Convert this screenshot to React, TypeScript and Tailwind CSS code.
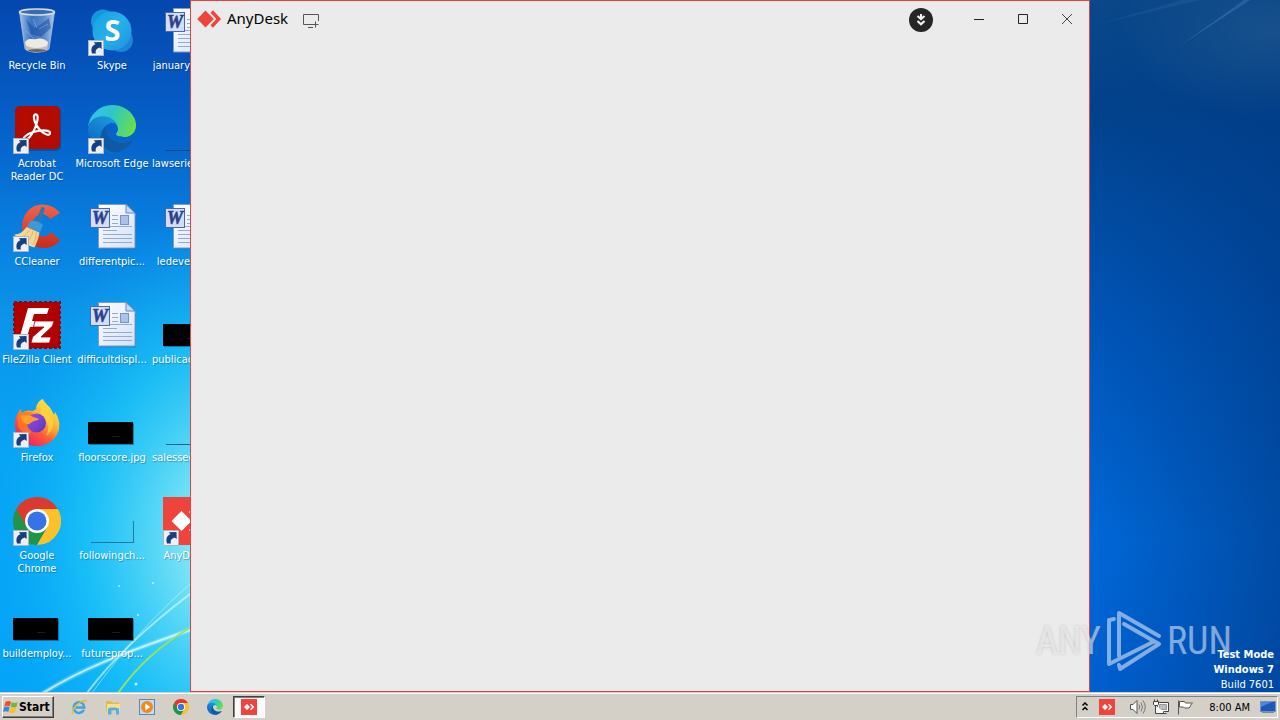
import type { ReactNode } from "react";

function Shortcut() {
  return (
    <g>
      <rect x="0.5" y="33.5" width="15" height="15" fill="#eceff5" stroke="#a9b4c4" />
      <path d="M4 46.500c-1.500-4.500 0-8 3.500-9.200L5.800 35.300l7.700-.3.200 7-2.100-1.500C8.500 41.500 7 43.500 8 46.500z" fill="#173f80" />
    </g>
  );
}

function Glyph({ children }: { children: ReactNode }) {
  return (
    <svg viewBox="0 0 48 49" className="block h-[49px] w-12 shrink-0" aria-hidden="true">
      {children}
    </svg>
  );
}

function RecycleBin() {
  return (
    <Glyph>
      <defs>
        <linearGradient id="bin" x1="0" x2="1">
          <stop offset="0" stopColor="#c4d8ee" stopOpacity=".85" />
          <stop offset=".35" stopColor="#5d8fcb" stopOpacity=".6" />
          <stop offset=".7" stopColor="#8fb5e0" stopOpacity=".6" />
          <stop offset="1" stopColor="#d6e4f3" stopOpacity=".85" />
        </linearGradient>
      </defs>
      <path d="M6.500 5l5.500 37c4 4 20 4 24 0L41.500 5z" fill="url(#bin)" stroke="#a7bfd9" strokeWidth=".8" />
      <path d="M13 12l8 9 6-3 9-7 2 10-10 9-10-3z" fill="#12489a" opacity=".5" />
      <path d="M13 24l8 8M26 22l9-5M20 12l4 9" stroke="#e3eefa" opacity=".3" />
      <path d="M12 35c4-5 7-2 11-3s8-1 12 3l-1 6c-4 4-17 4-21 0z" fill="#eee9e1" />
      <path d="M12 38c6 4 17 4 23 0l-.7 4.500c-4 4-18 4-21.600 0z" fill="#c4bcb5" />
      <ellipse cx="24" cy="43.500" rx="9" ry="1.500" fill="#676768" />
      <ellipse cx="24" cy="5" rx="17.500" ry="3" fill="#3f6ca6" stroke="#d5dde7" strokeWidth="1.600" />
    </Glyph>
  );
}

function Skype() {
  return (
    <Glyph>
      <defs>
        <linearGradient id="sky" x1="0" y1="0" x2="1" y2="1">
          <stop offset="0" stopColor="#159fe0" />
          <stop offset=".5" stopColor="#25b1ec" />
          <stop offset="1" stopColor="#2190dc" />
        </linearGradient>
      </defs>
      <circle cx="15" cy="14.500" r="12" fill="#1697d9" />
      <circle cx="33" cy="33" r="12" fill="#1c86d6" />
      <circle cx="24" cy="24" r="19.500" fill="url(#sky)" />
      <text x="24.500" y="33.500" textAnchor="middle" fill="#fff" fontFamily="Open Sans, sans-serif" fontWeight="700" fontSize="29">S</text>
      <Shortcut />
    </Glyph>
  );
}

function Acrobat() {
  return (
    <Glyph>
      <rect x="3" y="2" width="45" height="44" rx="5" fill="#10263f" opacity=".35" />
      <rect x="2" y="1" width="45" height="43" rx="5" fill="#b30b00" />
      <path
        d="M22 9.500c3-1 3.500 4 1.500 9.500-2 6-6 13-9.500 15.500-3 1.500-4.500-1-1.500-3.500 3-2.500 10-5 16-5.500 5-.4 9 .5 8.500 3-.6 2.600-5.500.8-9-2.500-4-4-6.500-9-7-12.500-.2-2 .2-3.600 1-4z"
        fill="none"
        stroke="#fff"
        strokeWidth="2.200"
      />
      <Shortcut />
    </Glyph>
  );
}

function EdgeArt({ id }: { id: string }) {
  return (
    <>
      <defs>
        <linearGradient id={id + "a"} x1="0" x2="1">
          <stop offset="0" stopColor="#0c59a4" />
          <stop offset="1" stopColor="#1659a3" />
        </linearGradient>
        <linearGradient id={id + "b"} x1=".8" y1="0" x2=".3" y2="1">
          <stop offset="0" stopColor="#1b9de2" />
          <stop offset=".5" stopColor="#147fd0" />
          <stop offset="1" stopColor="#0b68b8" />
        </linearGradient>
        <linearGradient id={id + "c"} x1="0" y1=".3" x2="1" y2=".6">
          <stop offset="0" stopColor="#35c1f1" />
          <stop offset=".45" stopColor="#2fc6c6" />
          <stop offset="1" stopColor="#68e04a" />
        </linearGradient>
      </defs>
      <path fill={`url(#${id}a)`} d="M231.1 190.5c-3.4 1.8-6.9 3.4-10.5 4.7a101.8 101.8 0 0 1-35.9 6.5c-47.3 0-88.5-32.5-88.5-74.3 0-11.4 6.4-21.9 16.1-27.3-42.8 1.8-53.8 46.4-53.8 72.5 0 74 68.1 81.4 82.8 81.4 7.9 0 19.8-2.3 27-4.6l1.3-.4a128.3 128.3 0 0 0 66.6-52.8 4 4 0 0 0-5.1-5.7z" />
      <path fill={`url(#${id}b)`} d="M105.7 241.4a79.2 79.2 0 0 1-22.7-21.3 80.7 80.7 0 0 1 29.5-120c3.2-1.5 8.5-4.1 15.6-4a32.4 32.4 0 0 1 25.7 13 31.9 31.9 0 0 1 6.3 18.7c0-.2 24.5-79.6-80-79.6-43.9 0-80 41.6-80 78.2a130.2 130.2 0 0 0 12.1 56 128 128 0 0 0 156.4 67 75.5 75.5 0 0 1-62.8-8z" />
      <path fill={`url(#${id}c)`} d="M152.3 148.9c-.9 1-3.4 2.5-3.4 5.6 0 2.6 1.7 5.2 4.8 7.3 14.4 10.1 41.7 8.7 41.7 8.7a59.9 59.9 0 0 0 30.4-8.4 61.4 61.4 0 0 0 30.4-53.2c.3-22.4-8-37.3-11.4-43.9C223.5 23.7 177.8 0 128 0A128 128 0 0 0 0 126.2c.5-36.5 36.8-66 80-66 3.5 0 23.5.3 42 10a72.6 72.6 0 0 1 30.9 29.3c6.1 10.6 7.2 24.1 7.2 29.5s-2.7 13.3-7.8 19.9z" />
    </>
  );
}

function Edge() {
  return (
    <Glyph>
      <g transform="scale(.1875)">
        <EdgeArt id="edge" />
      </g>
      <Shortcut />
    </Glyph>
  );
}

function CCleaner() {
  return (
    <Glyph>
      <defs>
        <linearGradient id="cc" x1="0" y1="0" x2="0" y2="1">
          <stop offset="0" stopColor="#f0654a" />
          <stop offset="1" stopColor="#c92a1c" />
        </linearGradient>
      </defs>
      <path d="M47 10C38-1 22-1 14 9c-8 10-6 25 4 32 9 6 22 6 29-4l-9-8c-4 6-10 5-14 2-5-4-6-11-2-16 4-5 11-5 15 1z" fill="url(#cc)" />
      <path d="M28.500 4l3.500 1-5 17-5-1.500z" fill="#2a78b4" />
      <path d="M17 18c3-1 10 0 13 4l-3 7-13-5z" fill="#3b9bd8" />
      <path d="M13.500 24l13 5.500c-1 6-3 11-5 15-5-1-15-6-20-13 5 0 9-3 12-7.500z" fill="#f5d694" />
      <path d="M17 26c-2 4-6 8-10 9M20 28c-1 5-4 10-7 12M23.500 29c-.5 5-2 10-3.500 13" stroke="#dcb573" fill="none" />
      <Shortcut />
    </Glyph>
  );
}

function FileZilla() {
  return (
    <Glyph>
      <rect x="1" y="1" width="46" height="46" fill="#b00000" />
      <rect x="1" y="1" width="46" height="46" fill="none" stroke="#8d0a12" strokeWidth="2" strokeDasharray="3 2" />
      <path d="M15 7h21l-2 6H21l-2 7h12l-2 6H17l-5 16H5z" fill="#fff" />
      <path d="M22 20h19l-1.500 5L28 36h10l-1.500 6H18l1.500-6L31 26h-10.500z" fill="#fff" stroke="#b00000" strokeWidth=".8" />
      <Shortcut />
    </Glyph>
  );
}

function FirefoxLogo() {
  return (
    <Glyph>
      <defs>
        <linearGradient id="fx" x1=".85" y1="0" x2=".2" y2="1">
          <stop offset="0" stopColor="#fff14f" />
          <stop offset=".4" stopColor="#ffb02e" />
          <stop offset=".65" stopColor="#ff5a36" />
          <stop offset="1" stopColor="#e3166f" />
        </linearGradient>
        <linearGradient id="fp" x1="0" y1="0" x2="1" y2="1">
          <stop offset="0" stopColor="#a04cf0" />
          <stop offset="1" stopColor="#5636b8" />
        </linearGradient>
      </defs>
      <path d="M30 0c1 4 7 7 9 12l2 4 1-3c4 6 5 12 4 17-2 10-11 17-22 17C11 47 2 38 2 26 2 18 5 13 8 10c0 2 0 3 1 4 3-3 7-3 10-2 1 0 3-1 4-2 0-4 3-9 7-10z" fill="url(#fx)" />
      <path d="M31 3c0 5 8 9 9 18 1 7-2 13-7 16 3-6 3-11 0-15-2-4-6-5-6-10 0-3 1-7 4-9z" fill="#ffd43d" opacity=".8" />
      <path d="M7 10c0 3 1 4 2 4 3-2 8-2 12 1l1 8-5 12C9 34 5 30 5 25c-.5-6 0-11 2-15z" fill="#ff7a22" opacity=".8" />
      <circle cx="23.500" cy="24" r="9.500" fill="url(#fp)" />
      <path d="M8 17c5-2 9-1 12 1 2 1 5 1 6 2-1 2-5 1-7 3-2 1-3 3-6 2-3-2-5-4-5-8z" fill="#ffa028" />
      <Shortcut />
    </Glyph>
  );
}

function ChromeArt() {
  return (
    <>
      <path d="M24 24L3.200 12A24 24 0 0 0 24 48l10.400-18z" fill="#219447" />
      <path d="M44.800 12A24 24 0 0 1 24 48l10.400-18L24 12z" fill="#f9c22b" />
      <path d="M24 12h20.800A24 24 0 0 0 3.200 12l10.400 18z" fill="#db3a2f" />
      <circle cx="24" cy="24" r="12" fill="#fff" />
      <circle cx="24" cy="24" r="9.500" fill="#3573e6" />
    </>
  );
}

function Chrome() {
  return (
    <Glyph>
      <ChromeArt />
      <Shortcut />
    </Glyph>
  );
}

function WordDoc() {
  return (
    <Glyph>
      <defs>
        <linearGradient id="pg" x1="0" y1="0" x2="1" y2="1">
          <stop offset="0" stopColor="#fff" />
          <stop offset="1" stopColor="#d4e0f6" />
        </linearGradient>
      </defs>
      <path d="M10.500 1.500h28l8.500 9v34.500H10.500z" fill="url(#pg)" stroke="#7d9bcb" />
      <path d="M38 1.500v8.500h9z" fill="#c9daf4" stroke="#6787bd" />
      <path d="M15 27.500h14M15 31.500h29M15 35.500h29M15 39.500h29M24 12.500h6M24 16.500h6M24 20.500h6M15 23.500h29" stroke="#92aad6" />
      <rect x="32.500" y="12.500" width="8" height="9" fill="#a9c2e6" stroke="#7595ca" />
      <path d="M12 46h36V13" stroke="#315f98" opacity=".4" fill="none" />
      <rect x="2.500" y="5.500" width="19" height="19" fill="#d3def4" stroke="#4a68ad" />
      <text x="12" y="21" textAnchor="middle" fill="#2b3f8f" stroke="#2b3f8f" strokeWidth=".6" fontFamily="Liberation Serif, serif" fontStyle="italic" fontWeight="700" fontSize="18">W</text>
    </Glyph>
  );
}

function BlackThumb() {
  return (
    <Glyph>
      <rect x="1" y="24" width="45" height="22" fill="#063a60" opacity=".5" />
      <rect y="23" width="45" height="22" fill="#000" />
      <path d="M24 37.500h8" stroke="#1c1c1c" />
    </Glyph>
  );
}

function ClearThumb() {
  return (
    <Glyph>
      <path d="M3 45.500h42.500V24" fill="none" stroke="#12617f" opacity=".75" />
    </Glyph>
  );
}

function FlatThumb() {
  return (
    <Glyph>
      <path d="M3 45.500h42" fill="none" stroke="#0e3a66" opacity=".75" />
    </Glyph>
  );
}

function AnyDeskTile() {
  return (
    <Glyph>
      <rect width="48" height="48" fill="#ef443b" />
      <path d="M18.500 14l10 10-10 10-10-10z" fill="#fff" />
      <path d="M29 12l12 12-12 12-3-3 9-9-9-9z" fill="#fff" />
      <Shortcut />
    </Glyph>
  );
}

type Item = { label: string; art: ReactNode };

const columns: Item[][] = [
  [
    { label: "Recycle Bin", art: <RecycleBin /> },
    { label: "Acrobat Reader DC", art: <Acrobat /> },
    { label: "CCleaner", art: <CCleaner /> },
    { label: "FileZilla Client", art: <FileZilla /> },
    { label: "Firefox", art: <FirefoxLogo /> },
    { label: "Google Chrome", art: <Chrome /> },
    { label: "buildemploy...", art: <BlackThumb /> },
  ],
  [
    { label: "Skype", art: <Skype /> },
    { label: "Microsoft Edge", art: <Edge /> },
    { label: "differentpic...", art: <WordDoc /> },
    { label: "difficultdispl...", art: <WordDoc /> },
    { label: "floorscore.jpg", art: <BlackThumb /> },
    { label: "followingch...", art: <ClearThumb /> },
    { label: "futureprop...", art: <BlackThumb /> },
  ],
];

const partial: Item[] = [
  { label: "january", art: <WordDoc /> },
  { label: "lawserie", art: <FlatThumb /> },
  { label: "ledeve", art: <WordDoc /> },
  { label: "publicac", art: <BlackThumb /> },
  { label: "salessee", art: <FlatThumb /> },
  { label: "AnyD", art: <AnyDeskTile /> },
];

function Wallpaper() {
  return (
    <svg className="absolute inset-0 h-full w-full" viewBox="0 0 1280 692" preserveAspectRatio="none" aria-hidden="true">
      <defs>
        <linearGradient id="wl" x1="0" y1="0" x2="0" y2="1">
          <stop offset="0" stopColor="#0447ae" />
          <stop offset=".18" stopColor="#0560c8" />
          <stop offset=".32" stopColor="#087cde" />
          <stop offset=".46" stopColor="#0b94ea" />
          <stop offset=".65" stopColor="#07a4f4" />
          <stop offset="1" stopColor="#04a4f9" />
        </linearGradient>
        <radialGradient id="glow" gradientUnits="userSpaceOnUse" cx="240" cy="540" r="340" gradientTransform="translate(240 540) scale(.76 1) translate(-240 -540)">
          <stop offset="0" stopColor="#b4f2f6" />
          <stop offset=".25" stopColor="#7be6f6" stopOpacity=".9" />
          <stop offset=".6" stopColor="#22ccf8" stopOpacity=".65" />
          <stop offset="1" stopColor="#0aa8f4" stopOpacity="0" />
        </radialGradient>
        <linearGradient id="wr" x1="0" y1="0" x2="0" y2="1">
          <stop offset="0" stopColor="#0a4889" />
          <stop offset=".16" stopColor="#02428c" />
          <stop offset=".45" stopColor="#0054b6" />
          <stop offset=".78" stopColor="#0068d8" />
          <stop offset="1" stopColor="#005fd0" />
        </linearGradient>
        <linearGradient id="shade" x1="0" x2="1">
          <stop offset="0" stopColor="#003a85" stopOpacity="0" />
          <stop offset="1" stopColor="#003a85" stopOpacity=".62" />
        </linearGradient>
        <radialGradient id="haze">
          <stop offset="0" stopColor="#2f6590" stopOpacity=".45" />
          <stop offset="1" stopColor="#2f6590" stopOpacity="0" />
        </radialGradient>
      </defs>
      <rect width="640" height="692" fill="url(#wl)" />
      <rect width="640" height="692" fill="url(#glow)" />
      <rect x="640" width="640" height="692" fill="url(#wr)" />
      <rect x="1090" width="190" height="692" fill="url(#shade)" />
      <ellipse cx="1270" cy="30" rx="150" ry="90" fill="url(#haze)" />
      <path d="M1178 47L1250 0h-6z" fill="#5c93c4" opacity=".3" />
      <path d="M1095 25L1200 0h-18z" fill="#3c78b4" opacity=".2" />
      <g fill="none" stroke="#e4fbff" strokeLinecap="round">
        <path d="M43 693C80 670 120 654 190 630" strokeWidth="5" opacity=".25" />
        <path d="M43 693C80 670 120 654 190 630" strokeWidth="2" opacity=".75" />
        <path d="M87 693C110 662 140 632 190 594" strokeWidth="2" opacity=".6" />
        <path d="M92 693C125 648 150 620 190 584" opacity=".5" />
      </g>
      <path d="M118 693C138 665 160 645 190 628" fill="none" stroke="#93e465" strokeWidth="2" />
      <g fill="#e8fcff" opacity=".8">
        <circle cx="119" cy="586" r="1" />
        <circle cx="153" cy="583" r="1" />
        <circle cx="136" cy="684" r="1.500" />
        <circle cx="138" cy="615" r="1" />
      </g>
    </svg>
  );
}

function AnyDeskWindow() {
  return (
    <section className="absolute top-0 right-[190px] bottom-0 left-[190px] flex flex-col border border-[#e0453f] bg-[#ebebeb]" aria-label="AnyDesk">
      <header className="flex h-9 items-center pl-1.5">
        <svg viewBox="0 0 24 18" className="h-[18px] w-6" aria-hidden="true">
          <path d="M8.500 .5l8.300 8.500-8.300 8.500L.2 9z" fill="#ef443b" />
          <path d="M13.500 2.700L16 .3 24 9l-8 8.700-2.500-2.400L19.300 9z" fill="#ef443b" />
        </svg>
        <h1 className="ml-1.5 pb-0.5 font-['Noto_Sans',sans-serif] text-[15px] leading-5 text-black">AnyDesk</h1>
        <button type="button" aria-label="New session" className="ml-3.5 pt-1">
          <svg viewBox="0 0 18 16" className="h-4 w-[18px]" fill="none" stroke="#555" aria-hidden="true">
            <path d="M11 11.500H1.500v-10h15V8M6 14.500h5M13.500 8.500v6M10.500 11.500h6" />
          </svg>
        </button>
        <div className="ml-auto flex items-center">
          <button type="button" aria-label="Downloads" className="mr-6 pt-0.5">
            <svg viewBox="0 0 24 24" className="h-6 w-6" aria-hidden="true">
              <circle cx="12" cy="12" r="12" fill="#262626" />
              <path d="M8.500 8l3.500 3 3.500-3M8.500 13l3.500 3.300 3.500-3.300" fill="none" stroke="#f2f2f2" strokeWidth="2.200" />
              <path d="M12 6v4" stroke="#f2f2f2" strokeWidth="2" />
            </svg>
          </button>
          <button type="button" aria-label="Minimize" className="flex h-9 w-11 items-center justify-center">
            <svg viewBox="0 0 12 12" className="h-3 w-3" stroke="#222" aria-hidden="true"><path d="M1 6.500h10" /></svg>
          </button>
          <button type="button" aria-label="Maximize" className="flex h-9 w-11 items-center justify-center">
            <svg viewBox="0 0 12 12" className="h-3 w-3" fill="none" stroke="#222" aria-hidden="true"><path d="M1.500 1.500h9v9h-9z" /></svg>
          </button>
          <button type="button" aria-label="Close" className="flex h-9 w-11 items-center justify-center">
            <svg viewBox="0 0 12 12" className="h-3 w-3" stroke="#444" aria-hidden="true"><path d="M1 1l10 10M11 1L1 11" /></svg>
          </button>
        </div>
      </header>
    </section>
  );
}

function Watermark() {
  return (
    <div className="absolute right-12 bottom-5 flex items-center gap-1 font-['Roboto_Condensed','Liberation_Sans_Narrow','Liberation_Sans',sans-serif] text-[38px] leading-[62px] text-white/50">
      <span className="[text-shadow:0_0_3px_rgb(110_110_110/0.35)]">ANY</span>
      <svg viewBox="0 0 58 62" className="h-[62px] w-[58px]" fill="none" stroke="#fff" strokeOpacity=".5" strokeWidth="4" strokeLinejoin="round" strokeLinecap="round" aria-hidden="true">
        <path d="M9 9L4 10v44l44-22M14 46V3l40 23M19 14l35 20-39 25-1-4" />
      </svg>
      <span>RUN</span>
    </div>
  );
}

function DesktopItem({ item }: { item: Item }) {
  return (
    <button type="button" className="flex h-[98px] w-[74px] flex-col items-center pt-[7px]">
      {item.art}
      <span className="mt-[3px] text-center [text-shadow:1px_1px_1px_rgb(0_30_80/0.35)]">{item.label}</span>
    </button>
  );
}

function TileSmall() {
  return (
    <svg viewBox="0 0 16 16" className="h-4 w-4" aria-hidden="true">
      <rect width="16" height="16" fill="#ef443b" />
      <path d="M6 5l3 3-3 3-3-3zM9 5.500l1-.8L13.300 8 10 11.300l-1-.8L11 8z" fill="#fff" />
    </svg>
  );
}

function Taskbar() {
  return (
    <footer className="relative flex h-7 shrink-0 items-stretch border-t border-[#d4d0c8] bg-[#d4d0c8] pt-px pr-0.5 pl-0.5 shadow-[inset_0_1px_0_#fff]">
      <div className="flex flex-1 items-center py-0.5">
        <button type="button" className="flex h-[22px] w-[52px] items-center border border-t-white border-r-[#404040] border-b-[#404040] border-l-white text-[12px] font-bold text-black shadow-[inset_-1px_-1px_0_#808080]">
          <svg viewBox="0 0 16 16" className="h-4 w-4" aria-hidden="true">
            <path d="M2.500 3C4.500 1.500 6.500 2 8 3L6.800 7.500C5 6.500 3.200 6.500 1.200 7.700z" fill="#e8542a" />
            <path d="M8.800 3.300c2 1 4 1 6-.3l-1.300 4.700c-2 1.200-4 1.200-5.900.1z" fill="#77b82a" />
            <path d="M1 8.500c2-1.200 3.800-1.200 5.600-.2L5.300 13C3.500 12 1.700 12 0 13z" fill="#3a86d8" />
            <path d="M7.400 8.700c2 1 4 1 5.900-.1L12 13.300c-2 1.200-4 1.200-5.900.1z" fill="#f6bf26" />
          </svg>
          Start
        </button>
        <nav className="ml-[17px] flex items-center gap-[18px]" aria-label="Pinned programs">
          <button type="button" aria-label="Internet Explorer">
            <svg viewBox="0 0 18 18" className="h-4 w-4" fill="none" aria-hidden="true">
              <path d="M14.500 12A6 6 0 1 1 15 9.500H5" stroke="#3fa4e0" strokeWidth="2.800" />
              <path d="M2 16.500C-.5 14 5 7 10 4s8-3 7-.5" stroke="#e7b93c" strokeWidth="1.500" />
            </svg>
          </button>
          <button type="button" aria-label="Explorer">
            <svg viewBox="0 0 16 16" className="h-4 w-4" aria-hidden="true">
              <path d="M1 2h5l1 1.500h7V12H1z" fill="#e0bb52" />
              <path d="M2 5h13v7H2z" fill="#f7e08c" />
              <path d="M3 15.500V9.500C4 8 12 8 14 9.500v6h-3v-4H6.500v4z" fill="#5aaede" />
            </svg>
          </button>
          <button type="button" aria-label="Media Player">
            <svg viewBox="0 0 16 16" className="h-4 w-4" aria-hidden="true">
              <rect x=".5" y=".5" width="15" height="15" fill="#c3daf0" stroke="#5889bb" />
              <circle cx="8" cy="8" r="6" fill="#f08a1c" />
              <path d="M6.300 4.500v7l5-3.500z" fill="#fff" />
            </svg>
          </button>
          <button type="button" aria-label="Chrome">
            <svg viewBox="0 0 48 48" className="h-4 w-4" aria-hidden="true"><ChromeArt /></svg>
          </button>
          <button type="button" aria-label="Edge">
            <svg viewBox="0 0 256 256" className="h-4 w-4" aria-hidden="true"><EdgeArt id="tb" /></svg>
          </button>
        </nav>
        <button type="button" aria-label="AnyDesk window" className="ml-2.5 flex h-[22px] w-8 items-center justify-center border border-t-[#404040] border-r-white border-b-white border-l-[#404040] bg-[#fbfaf8] shadow-[inset_1px_1px_0_#808080]">
          <TileSmall />
        </button>
      </div>
      <div className="mt-0.5 mb-0.5 flex items-center border border-t-[#808080] border-r-white border-b-white border-l-[#808080] pr-px pl-1 text-black">
        <button type="button" aria-label="Show hidden icons">
          <svg viewBox="0 0 8 10" className="h-2.5 w-2" fill="none" stroke="#000" strokeWidth="1.500" aria-hidden="true"><path d="M1.500 3.500L4 1l2.500 2.500M1.500 8L4 5.500 6.500 8" /></svg>
        </button>
        <span className="ml-2.5"><TileSmall /></span>
        <svg viewBox="0 0 18 16" className="ml-3.5 h-4 w-[18px]" fill="#fff" stroke="#555" aria-hidden="true">
          <path d="M1.500 5.500H4l4-4v13l-4-4H1.500z" />
          <path d="M10 5.500q1.500 2.500 0 5M12 3.500q3 4.500 0 9M14 1.500q4.500 6.500 0 13" fill="none" stroke="#777" />
        </svg>
        <svg viewBox="0 0 16 16" className="ml-1.5 h-4 w-4" fill="#f8f8f8" stroke="#444" aria-hidden="true">
          <path d="M4.500 3.500h11v9h-11z" />
          <path d="M6.500 5.500h7v5h-7z" fill="#bdbdbd" stroke="#999" />
          <path d="M.5 2.500h5v3l-1 1h-3l-1-1zM1.500 .5v2M4.500 .5v2M2.500 6.500v8h11M10.500 12.500v2" />
        </svg>
        <svg viewBox="0 0 16 16" className="ml-2 h-4 w-4" fill="#fff" stroke="#555" aria-hidden="true">
          <path d="M1.500 1.500v14M2.500 2.500h5l1 1.500h7c-2 1-2 4-3.500 5H7.500l-1-1h-4z" />
        </svg>
        <time className="ml-4">8:00 AM</time>
        <button type="button" aria-label="Show desktop" className="ml-2.5">
          <svg viewBox="0 0 16 14" className="h-3.5 w-4" aria-hidden="true">
            <rect x=".5" y="1.500" width="15" height="10" fill="#1e57b5" stroke="#6c94cc" />
            <path d="M1 2h11L1 7z" fill="#4c86d6" />
            <path d="M2 12.500h12" stroke="#888" />
          </svg>
        </button>
      </div>
    </footer>
  );
}

export default function App() {
  return (
    <div className="flex h-screen flex-col overflow-hidden font-['DejaVu_Sans_Condensed','DejaVu_Sans',sans-serif] text-[11px] leading-[13px] text-white">
      <main className="relative min-h-0 flex-1 overflow-hidden">
        <Wallpaper />
        <div className="relative flex gap-px">
          {columns.map((items, i) => (
            <div key={i} className="flex flex-col">
              {items.map((item) => (
                <DesktopItem key={item.label} item={item} />
              ))}
            </div>
          ))}
          <div className="flex w-10 flex-col">
            {partial.map((item) => (
              <button key={item.label} type="button" className="flex h-[98px] w-10 flex-col items-end pt-[7px]">
                <span className="flex w-[27px] overflow-hidden">{item.art}</span>
                <span className="mt-[3px] max-w-[38px] overflow-hidden whitespace-nowrap [text-shadow:1px_1px_1px_rgb(0_30_80/0.35)]">{item.label}</span>
              </button>
            ))}
          </div>
        </div>
        <AnyDeskWindow />
        <Watermark />
        <div className="absolute right-1.5 bottom-0 text-right leading-[15px]">
          <p className="font-bold">Test Mode</p>
          <p className="font-bold">Windows 7</p>
          <p>Build 7601</p>
        </div>
      </main>
      <Taskbar />
    </div>
  );
}
